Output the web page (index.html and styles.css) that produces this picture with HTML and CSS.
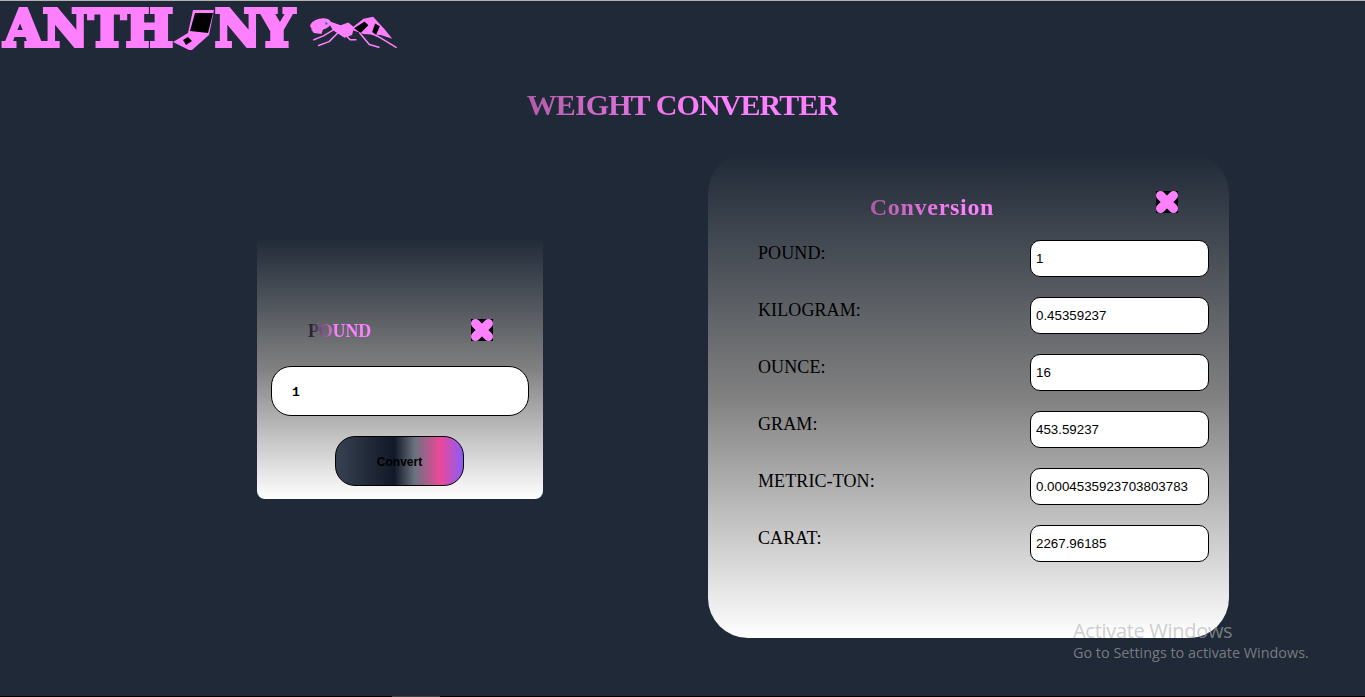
FILE: index.html
```html
<!DOCTYPE html>
<html lang="en">
<head>
<meta charset="utf-8">
<title>Weight Converter</title>
<link rel="stylesheet" href="styles.css">
</head>
<body>
<div class="page">
  <header class="logo">
    <span class="logo-text">ANTH</span>
    <svg class="laptop" viewBox="0 0 42 42" aria-hidden="true">
      <path class="pink" d="M20 1H41L36 26L19 41H16L0 33L15 24Z"/>
      <path class="dark" d="M22 4H40L35 24L17 22Z"/>
      <path class="dark" d="M10 31L15 28L19 32L13 36Z"/>
    </svg>
    <span class="logo-text ny">NY</span>
    <svg class="ant" viewBox="0 0 92 36" aria-hidden="true">
      <ellipse class="pink" cx="11" cy="9" rx="11" ry="6" transform="rotate(-12 11 9)"/>
      <path class="pink" d="M1 14L14 13L12 19L4 18Z"/>
      <path class="pink" d="M18 5L32 10L40 7L46 12L44 20L36 23L24 15Z"/>
      <path class="pink" d="M42 14L56 3L66 1L78 14L86 24L74 20L56 19Z"/>
      <path class="dark" d="M46 13L57 6L61 10L53 18Z"/>
      <path class="dark" d="M68 8L73 11L69 20L65 17Z"/>
      <circle class="eye" cx="17" cy="8" r="1.3"/>
      <path class="leg" d="M24 15L14 21L4 25M30 17L20 27L9 31M38 21L42 25L48 25M52 18L62 30L72 33M60 17L72 22L90 33"/>
    </svg>
  </header>
  <h1 class="title"><span class="grad grad-title">WEIGHT CONVERTER</span></h1>
  <main class="panels">
    <section class="card input-card">
      <div class="card-head">
        <h2 class="unit"><span class="grad grad-unit">POUND</span></h2>
        <svg class="close" viewBox="0 0 22 22" aria-hidden="true">
          <path class="dark" d="M0 0H22V22H0Z"/>
          <path class="x" d="M4.5 4.5L17.5 17.5M17.5 4.5L4.5 17.5"/>
        </svg>
      </div>
      <input class="amount" type="text" value="1">
      <button class="convert" type="button">Convert</button>
    </section>
    <section class="card result-card">
      <div class="result-head">
        <h2 class="result-title"><span class="grad grad-result">Conversion</span></h2>
        <svg class="close close-result" viewBox="0 0 22 22" aria-hidden="true">
          <path class="dark" d="M0 0H22V22H0Z"/>
          <path class="x" d="M4.5 4.5L17.5 17.5M17.5 4.5L4.5 17.5"/>
        </svg>
      </div>
      <div class="rows">
        <label class="row"><span class="name">POUND:</span><input class="value" type="text" value="1"></label>
        <label class="row"><span class="name">KILOGRAM:</span><input class="value" type="text" value="0.45359237"></label>
        <label class="row"><span class="name">OUNCE:</span><input class="value" type="text" value="16"></label>
        <label class="row"><span class="name">GRAM:</span><input class="value" type="text" value="453.59237"></label>
        <label class="row"><span class="name">METRIC-TON:</span><input class="value" type="text" value="0.0004535923703803783"></label>
        <label class="row"><span class="name">CARAT:</span><input class="value" type="text" value="2267.96185"></label>
      </div>
    </section>
  </main>
  <footer class="edge"><span class="edge-thumb"></span></footer>
  <aside class="activate">
    <div class="activate-big">Activate Windows</div>
    <div class="activate-small">Go to Settings to activate Windows.</div>
  </aside>
</div>
</body>
</html>
```

FILE: styles.css
```css
* { box-sizing: border-box; }
html, body { margin: 0; height: 100%; overflow: hidden; }
body { background: #1f2937; }
.page {
  position: relative;
  height: 697px;
  display: flex;
  flex-direction: column;
  border-top: 1px solid #b4b4b4;
  background: #1f2937;
  font-family: "Liberation Serif", serif;
}
.pink { fill: #ff80ff; }
.dark { fill: #000; }
.eye { fill: #2a6fd6; }
.leg { fill: none; stroke: #ff80ff; stroke-width: 1.6; stroke-linecap: round; stroke-linejoin: round; }

.logo {
  height: 54px;
  display: flex;
  align-items: flex-start;
  padding: 8px 0 0 4px;
  flex: none;
}
.logo-text {
  font-family: "DejaVu Serif", serif;
  font-weight: 700;
  font-size: 50px;
  line-height: 40px;
  letter-spacing: 0;
  color: #ff80ff;
  -webkit-text-stroke: 4px #ff80ff;
}
.ny { margin-left: 0; letter-spacing: -2px; }
.laptop { width: 42px; height: 42px; margin: 0; flex: none; }
.ant { width: 88px; height: 36px; margin: 6px 0 0 18px; flex: none; }

.title {
  margin: 0;
  height: 98px;
  padding-top: 32px;
  text-align: center;
  font-size: 30px;
  line-height: 36px;
  letter-spacing: -.9px;
  font-weight: 700;
  flex: none;
}
.grad {
  display: inline-block;
  color: transparent;
  -webkit-background-clip: text;
  background-clip: text;
}
.grad-title { background-image: linear-gradient(to right, #b35ca9, #ff80ff 58%); }
.grad-unit { background-image: linear-gradient(to right, #2a2233 5%, #ff80ff 45%); }
.grad-result { background-image: linear-gradient(to right, #ab5aa3, #ff80ff 70%); }

.panels {
  flex: 1;
  display: flex;
  align-items: flex-start;
  padding-left: 257px;
}
.card { background: linear-gradient(#1f2937, #808080, #fff); }

.input-card {
  width: 286px;
  height: 262px;
  margin-top: 84px;
  border-radius: 8px;
  display: flex;
  flex-direction: column;
  align-items: center;
}
.card-head {
  width: 100%;
  height: 129px;
  padding: 82px 50px 0 51px;
  display: flex;
  justify-content: space-between;
  align-items: flex-start;
}
.unit { margin: 0; font-size: 18px; line-height: 24px; letter-spacing: -.2px; font-weight: 700; }
.close { width: 22px; height: 22px; flex: none; display: block; }
.close-result { margin: 2px 0 0 50px; }
.x { fill: none; stroke: #ff80ff; stroke-width: 9; stroke-linecap: round; }
.amount {
  width: 258px;
  height: 50px;
  border: 1px solid #000;
  border-radius: 20px;
  background: #fff;
  padding: 2px 0 0 20px;
  font: 700 13px "Liberation Mono", monospace;
  color: #000;
  outline: none;
}
.convert {
  width: 129px;
  height: 50px;
  margin: 20px 1px 0 0;
  border: 1px solid #000;
  border-radius: 20px;
  background: linear-gradient(to right, #374151, #111827 46%, #6b7280 62%, #ec4899 82%, #8b5cf6);
  font: 700 12px "Liberation Sans", sans-serif;
  color: #000;
  padding: 2px 0 0;
}

.result-card {
  width: 521px;
  height: 485px;
  margin-left: 165px;
  border-radius: 40px;
  padding: 36px 20px 0 50px;
}
.result-head {
  height: 51px;
  display: flex;
  align-items: flex-start;
}
.result-title {
  margin: 0;
  width: 348px;
  padding-top: 3px;
  text-align: center;
  font-size: 24px;
  line-height: 30px;
  letter-spacing: .7px;
  font-weight: 700;
}
.rows { display: flex; flex-direction: column; gap: 20px; }
.row {
  height: 37px;
  display: flex;
  justify-content: space-between;
  align-items: flex-start;
}
.name {
  font-size: 18px;
  line-height: 24px;
  letter-spacing: .1px;
  margin-top: 1px;
  color: #000;
}
.value {
  width: 179px;
  height: 37px;
  border: 1px solid #000;
  border-radius: 10px;
  background: #fff;
  padding: 0 0 0 5px;
  font: 400 13.33px "Liberation Sans", sans-serif;
  color: #000;
  outline: none;
}

.edge {
  height: 1px;
  background: #000;
  flex: none;
  padding-left: 392px;
}
.edge-thumb { display: block; width: 48px; height: 1px; background: #444; }

.activate {
  position: absolute;
  left: 1073px;
  top: 618px;
  font-family: "Open Sans", sans-serif;
  color: rgba(177, 177, 177, .62);
  pointer-events: none;
}
.activate-big { font-size: 20px; line-height: 24px; font-weight: 400; letter-spacing: -.3px; }
.activate-small { font-size: 14.4px; line-height: 20px; }
```
